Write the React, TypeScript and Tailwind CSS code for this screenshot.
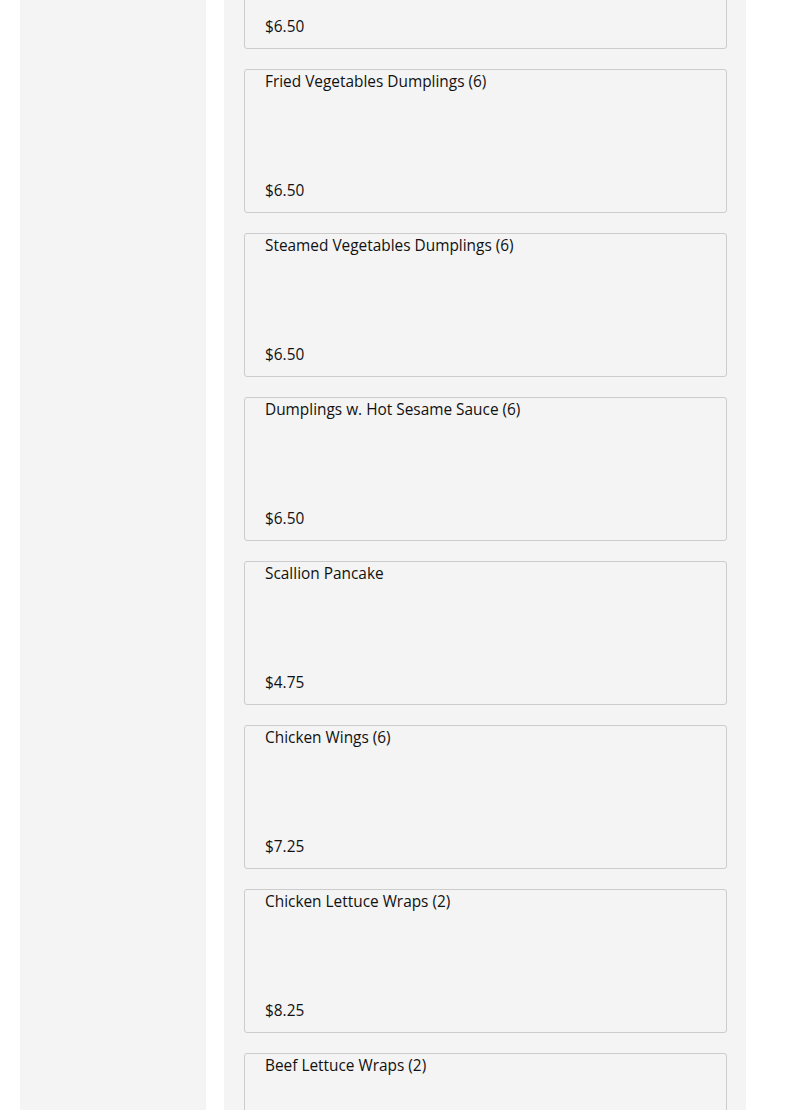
import React from 'react';

interface IMenuItem {
  name: string;
  price: string;
}

const items: IMenuItem[] = [
  { name: 'Pork Dumplings (6)', price: '$6.50' },
  { name: 'Fried Vegetables Dumplings (6)', price: '$6.50' },
  { name: 'Steamed Vegetables Dumplings (6)', price: '$6.50' },
  { name: 'Dumplings w. Hot Sesame Sauce (6)', price: '$6.50' },
  { name: 'Scallion Pancake', price: '$4.75' },
  { name: 'Chicken Wings (6)', price: '$7.25' },
  { name: 'Chicken Lettuce Wraps (2)', price: '$8.25' },
  { name: 'Beef Lettuce Wraps (2)', price: '$8.25' },
];

const MenuCard: React.FC<{ item: IMenuItem }> = ({ item }) => (
  <div className="h-[144px] flex flex-col justify-between border border-[#cccccc] rounded-[3px] bg-[#f4f4f4] pl-5 pr-4 pt-[2px] pb-[11px]">
    <div className="text-[15.4px] leading-[20px] text-[#111111]">{item.name}</div>
    <div className="text-[15.4px] leading-[20px] text-[#111111]">{item.price}</div>
  </div>
);

const App: React.FC = () => {
  return (
    <div
      className="w-[785px] h-[1110px] overflow-hidden bg-white flex pl-5"
      style={{ fontFamily: '"Open Sans", "Liberation Sans", sans-serif' }}
    >
      <aside className="w-[186px] shrink-0 bg-[#f4f4f4]" />
      <main className="ml-[18px] w-[522px] shrink-0 bg-[#f4f4f4] pl-5 pr-[19px]">
        <div className="-mt-[95px] flex flex-col gap-5">
          {items.map((item) => (
            <MenuCard key={item.name} item={item} />
          ))}
        </div>
      </main>
    </div>
  );
};

export default App;
